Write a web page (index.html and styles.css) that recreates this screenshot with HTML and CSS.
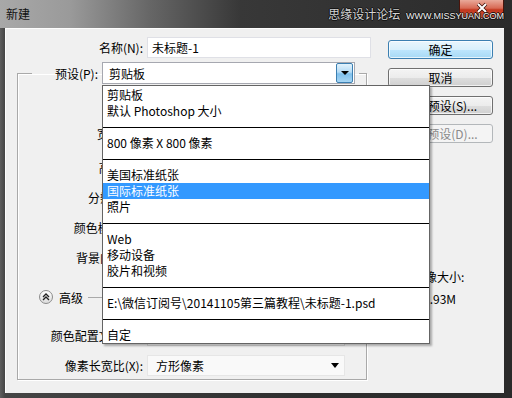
FILE: index.html
```html
<!DOCTYPE html>
<html lang="zh-CN">
<head>
    <meta charset="UTF-8">
    <title>新建</title>
    <link rel="stylesheet" href="styles.css">
</head>
<body>
    <div class="win">
        <div class="titlebar">
            <span class="title">新建</span>
            <div class="close-btn">
                <svg width="14" height="12" viewBox="0 0 14 12"><path d="M3 2 L11 10 M11 2 L3 10" stroke="#3a0d06" stroke-width="3.4"/><path d="M3 2 L11 10 M11 2 L3 10" stroke="#fff" stroke-width="2"/></svg>
            </div>
            <div class="watermark">思缘设计论坛 <span class="wm-url">WWW.MISSYUAN.COM</span></div>
        </div>

        <div class="frame">
            <div class="client">
                <div class="form">
                    <div class="name-row">
                        <label class="lbl">名称(N):</label>
                        <div class="field">未标题-1</div>
                    </div>

                    <fieldset class="group">
                        <legend>
                            <div class="preset-row">
                                <label class="lbl-preset">预设(P):</label>
                                <div class="combo">
                                    <span>剪贴板</span>
                                    <span class="drop-btn"><i class="tri"></i></span>
                                </div>
                            </div>
                        </legend>

                        <div class="rows">
                            <div class="row">
                                <label class="lbl">宽度(W):</label>
                                <div class="field small">800</div>
                                <div class="sel unit">像素</div>
                            </div>
                            <div class="row r-height">
                                <label class="lbl">高度(H):</label>
                                <div class="field small">800</div>
                                <div class="sel unit">像素</div>
                            </div>
                            <div class="row">
                                <label class="lbl">分辨率(R):</label>
                                <div class="field small">72</div>
                                <div class="sel unit">像素/英寸</div>
                            </div>
                            <div class="row">
                                <label class="lbl">颜色模式(M):</label>
                                <div class="sel small">RGB 颜色</div>
                                <div class="sel unit">8 位</div>
                            </div>
                            <div class="row">
                                <label class="lbl">背景内容(C):</label>
                                <div class="sel wide">白色</div>
                            </div>
                            <div class="row r-adv">
                                <span class="adv-btn">
                                    <svg width="12" height="12" viewBox="0 0 12 12"><path d="M3 6 L6 3 L9 6 M3 9 L6 6 L9 9" fill="none" stroke="#222" stroke-width="1.3"/></svg>
                                </span>
                                <span class="adv-text">高级</span>
                                <span class="adv-line"></span>
                            </div>
                            <div class="row r-profile">
                                <label class="lbl">颜色配置文件(O):</label>
                                <div class="sel wide">工作中的 RGB: sRGB IEC61966-2.1</div>
                            </div>
                            <div class="row">
                                <label class="lbl">像素长宽比(X):</label>
                                <div class="sel wide flat">
                                    <span>方形像素</span>
                                    <i class="tri"></i>
                                </div>
                            </div>
                        </div>
                    </fieldset>
                </div>

                <div class="side">
                    <button class="btn default">确定</button>
                    <button class="btn">取消</button>
                    <button class="btn">存储预设(S)...</button>
                    <button class="btn" disabled>删除预设(D)...</button>
                    <div class="size-info">
                        <div>图像大小:</div>
                        <div class="size-val">1.93M</div>
                    </div>
                </div>

                <ul class="menu">
                    <li>剪贴板</li>
                    <li>默认 Photoshop 大小</li>
                    <li class="sep"></li>
                    <li>800 像素 X 800 像素</li>
                    <li class="sep"></li>
                    <li>美国标准纸张</li>
                    <li class="active">国际标准纸张</li>
                    <li>照片</li>
                    <li class="sep"></li>
                    <li>Web</li>
                    <li>移动设备</li>
                    <li>胶片和视频</li>
                    <li class="sep"></li>
                    <li>E:\微信订阅号\20141105第三篇教程\未标题-1.psd</li>
                    <li class="sep"></li>
                    <li>自定</li>
                </ul>
            </div>
        </div>
    </div>
</body>
</html>
```

FILE: styles.css
```css
* {
    box-sizing: border-box;
}

body {
    margin: 0;
    background: #2a2a2a;
    font-family: "Noto Sans CJK SC", sans-serif;
    font-size: 12px;
    color: #000;
}

.win {
    width: 512px;
    height: 398px;
    display: flex;
    flex-direction: column;
}

/* title bar */
.titlebar {
    position: relative;
    height: 28px;
    display: flex;
    align-items: flex-start;
    padding-left: 6px;
    background: linear-gradient(90deg, #a8a8a8 0, #9a9a9a 70px, #666 150px, #383838 240px, #2b2b2b 100%);
}

.title {
    line-height: 28px;
    color: #111;
}

.close-btn {
    margin-left: auto;
    margin-right: 8px;
    width: 45px;
    height: 19px;
    display: flex;
    align-items: flex-start;
    justify-content: center;
    padding-top: 2px;
    border: 1px solid #4a140b;
    border-top: none;
    border-radius: 0 0 5px 5px;
    background: linear-gradient(#e9a99a 0, #d86a55 45%, #c2361d 55%, #d2573c 100%);
}

.watermark {
    position: absolute;
    right: 8px;
    top: 6px;
    font-size: 12px;
    line-height: 16px;
    color: #d4d4d4;
    text-shadow: 1px 0 0 #111, -1px 0 0 #111, 0 1px 0 #111, 0 -1px 0 #111;
    white-space: nowrap;
}

.wm-url {
    font-family: "Liberation Sans", sans-serif;
    font-size: 9px;
    color: #f0f0f0;
    margin-left: 3px;
}

/* frame + client */
.frame {
    flex: 1;
    display: flex;
    padding: 0 8px 5px 5px;
    background: linear-gradient(90deg, #5e5e5e 0, #454545 5px, #2e2e2e 60%, #2a2a2a 100%);
}

.client {
    position: relative;
    flex: 1;
    display: flex;
    background: #f0f0f0;
    box-shadow: inset 1px 1px 0 #fdfdfd;
}

.form {
    width: 368px;
    padding-top: 9px;
}

.name-row {
    display: flex;
    align-items: center;
    height: 21px;
}

.lbl {
    text-align: right;
    margin-right: 4px;
    white-space: nowrap;
}

.name-row .lbl {
    width: 138px;
}

.field {
    height: 21px;
    line-height: 19px;
    padding-left: 4px;
    background: #fff;
    border: 1px solid #dfe0e6;
}

.name-row .field {
    width: 224px;
}

/* group box */
.group {
    margin: 4px 0 0 12px;
    width: 350px;
    padding: 0 0 3px;
    border: 1px solid #a9a9a9;
    box-shadow: 1px 1px 0 #fff, inset 1px 1px 0 #fff;
}

.group legend {
    margin-left: 14px;
    padding: 0 4px 0 0;
}

.preset-row {
    display: flex;
    align-items: center;
    height: 22px;
}

.lbl-preset {
    width: 66px;
    text-align: right;
    margin-right: 4px;
}

.combo {
    width: 253px;
    height: 22px;
    display: flex;
    align-items: center;
    padding-left: 6px;
    background: #fff;
    border: 1px solid #a6a8b0;
}

.drop-btn {
    margin-left: auto;
    margin-right: 1px;
    width: 17px;
    height: 20px;
    display: flex;
    align-items: center;
    justify-content: center;
    border: 1px solid #3c7fb1;
    border-radius: 2px;
    background: linear-gradient(#e3f3fc 0, #b7dcf5 45%, #7fc0ec 55%, #a6d5f3 100%);
}

.tri {
    width: 0;
    height: 0;
    border-left: 4px solid transparent;
    border-right: 4px solid transparent;
    border-top: 4px solid #000;
}

.rows {
    display: flex;
    flex-direction: column;
    gap: 8px;
    padding-top: 38px;
}

.row {
    display: flex;
    align-items: center;
    height: 22px;
}

.row .lbl {
    width: 125px;
}

.r-height {
    margin-top: 4px;
}

.r-adv {
    margin-top: 10px;
}

.r-profile {
    margin-top: 8px;
}

.row .field.small {
    width: 70px;
}

.sel {
    height: 21px;
    line-height: 19px;
    padding-left: 5px;
    background: #fbfbfb;
    border: 1px solid #d9d9d9;
}

.sel.small {
    width: 70px;
}

.sel.unit {
    width: 100px;
    margin-left: 8px;
}

.sel.wide {
    width: 198px;
}

.sel.flat {
    display: flex;
    align-items: center;
    padding: 0 5px 0 8px;
    background: #f9f9f9;
    border-color: #e6e6e6;
}

.sel.flat .tri {
    margin-left: auto;
    border-top-width: 5px;
}

.adv-btn {
    margin-left: 21px;
    width: 14px;
    height: 14px;
    display: flex;
    align-items: center;
    justify-content: center;
    border: 1px solid #8c8c8c;
    border-radius: 50%;
    background: linear-gradient(#fff, #dcdcdc);
}

.adv-text {
    margin-left: 6px;
}

.adv-line {
    flex: 1;
    margin: 0 8px 0 5px;
    border-top: 1px solid #a9a9a9;
}

/* buttons */
.side {
    width: 105px;
    margin-left: 15px;
    padding-top: 12px;
    display: flex;
    flex-direction: column;
    gap: 9px;
}

.btn {
    height: 19px;
    padding: 0;
    font: inherit;
    line-height: 17px;
    color: #000;
    border: 1px solid #707070;
    border-radius: 3px;
    background: linear-gradient(#f4f4f4 0, #ececec 50%, #dedede 51%, #d0d0d0 100%);
    box-shadow: inset 0 0 0 1px rgba(255, 255, 255, 0.7);
}

.btn.default {
    border-color: #3c7fb1;
    background: linear-gradient(#eaf6fd 0, #d9f0fc 50%, #bee6fd 51%, #a7d9f5 100%);
}

.btn:disabled {
    color: #8a8a8a;
    border-color: #b3b7ba;
    background: #f4f4f4;
    box-shadow: none;
}

.size-info {
    margin-top: 117px;
    padding-left: 25px;
    line-height: 16px;
}

.size-val {
    margin-top: 6px;
    padding-left: 10px;
}

/* open preset list */
.menu {
    position: absolute;
    left: 97px;
    top: 57px;
    width: 328px;
    margin: 0;
    padding: 1px 0 0;
    list-style: none;
    background: #fff;
    border: 1px solid #646464;
    box-shadow: 2px 2px 2px rgba(0, 0, 0, 0.3);
}

.menu li {
    height: 16px;
    line-height: 16px;
    padding-left: 4px;
    white-space: nowrap;
}

.menu li.active {
    background: #3399ff;
    color: #fff;
}

.menu li.sep {
    height: 1px;
    margin: 8px 0 7px;
    padding: 0;
    background: #000;
}
```
